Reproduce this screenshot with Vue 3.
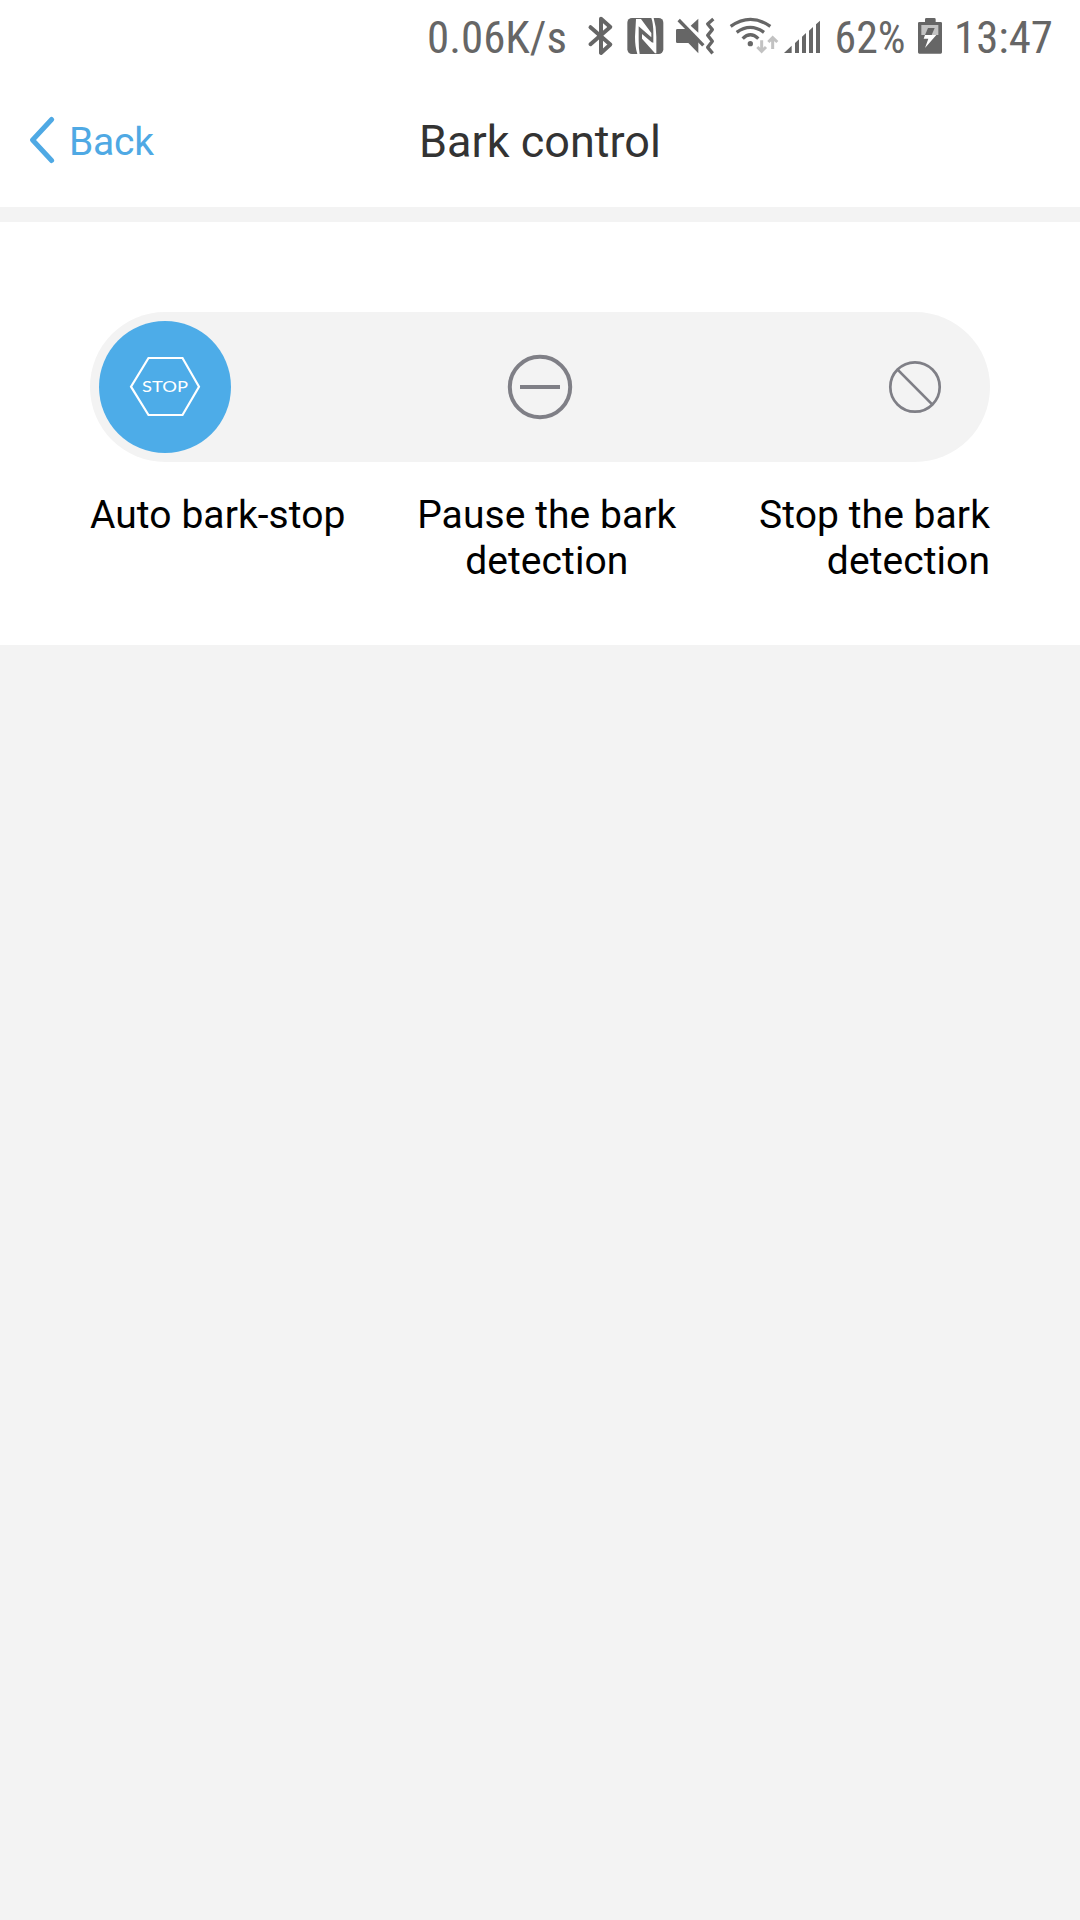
<template>
  <div class="page">
    <div class="status-bar">
      <svg width="150" height="72" viewBox="425 0 150 72">
        <text class="status-text" x="427" y="53" textLength="140" lengthAdjust="spacingAndGlyphs">0.06K/s</text>
      </svg>
      <!-- bluetooth -->
      <svg width="45" height="72" viewBox="575 0 45 72">
        <path class="line" stroke-width="4" d="M590.5 27.2 L610.3 44.5 L601 53 V18.8 L610.3 27 L590.5 44.2" />
      </svg>
      <!-- nfc -->
      <svg width="50" height="72" viewBox="150 0 150 216">
        <rect class="solid" x="172" y="54" width="108" height="108" rx="14" />
        <path fill="#fff" d="M198 57 H213 L244 99 V112 L206 79 V120 Q206 145 209 162 H202 Q195 140 195 110 Z" />
        <path fill="#fff" d="M244 54 H251 Q259 80 259 110 V160 H255 L216 116 V102 L245 127 L250 128 V100 Q250 70 244 54 Z" />
      </svg>
      <!-- sound off / vibrate -->
      <svg width="52" height="72" viewBox="300 0 156 216">
        <path class="solid" d="M385 56 V98 L362 77 Z" />
        <path class="solid" d="M322 87 H350 L385 122 V160 L355 129 H322 Q318 129 318 125 V91 Q318 87 322 87 Z" />
        <path class="line butt" stroke-width="10" d="M326 60 L400 136" />
        <path class="line butt" stroke-width="10" d="M430 57 L413 72 L427 89 L413 106 L427 124 L413 142 L428 160" />
      </svg>
      <!-- wifi -->
      <svg width="60" height="72" viewBox="36 0 180 216">
        <circle class="solid" cx="121" cy="131" r="8" />
        <path class="line butt" stroke-width="10" d="M98 116 Q121 93 145 116 M80 97 Q121 67 162 97 M62 79 Q121 37 181 79" />
        <path fill="none" stroke="#c2c2c2" stroke-width="9" d="M155 121 V152 M142 141 L155 154 L168 141 M188 147 V114 M175 126 L188 113 L202 126" />
      </svg>
      <!-- signal -->
      <svg width="46" height="72" viewBox="216 0 138 216">
        <path class="solid" d="M222 159 L245 137 V159 Z M255 159 V129 L267 118 V159 Z M276 159 V110 L288 99 V159 Z M297 159 V92 L309 81 V159 Z M318 159 V73 L330 62 V159 Z" />
      </svg>
      <svg width="84" height="72" viewBox="828 0 84 72">
        <text class="status-text" x="834.5" y="53" textLength="71" lengthAdjust="spacingAndGlyphs">62%</text>
      </svg>
      <!-- battery -->
      <svg width="36" height="72" viewBox="276 0 108 216">
        <path class="solid" d="M315 66 V58 Q315 54 319 54 H343 Q347 54 347 58 V66 H362 Q366 66 366 70 V157 Q366 161 362 161 H298 Q294 161 294 157 V70 Q294 66 298 66 Z" />
        <rect x="304" y="75" width="51" height="30" fill="#c2c2c2" />
        <path class="solid" d="M324 84 H344 L335 105 H315 Z" />
        <path fill="#fff" d="M315 105 H349 L315 144 L325 116 H311 Z" />
      </svg>
      <svg width="132" height="72" viewBox="948 0 132 72">
        <text class="status-text" x="954" y="53" textLength="99" lengthAdjust="spacingAndGlyphs">13:47</text>
      </svg>
    </div>

    <header class="header">
      <button class="back" type="button">
        <svg width="26" height="48" viewBox="0 0 26 48">
          <path d="M22.6 3.5 L3.6 24 L22.6 44.5" fill="none" stroke="#4fa9e4" stroke-width="5" stroke-linecap="round" stroke-linejoin="round" />
        </svg>
        <span>Back</span>
      </button>
      <h1 class="title">Bark control</h1>
    </header>

    <main class="panel">
      <div class="track">
        <button
          v-for="(mode, i) in modes"
          :key="mode.id"
          type="button"
          class="knob"
          :class="{ active: current === i }"
          @click="current = i"
        >
          <svg v-if="mode.id === 'auto'" width="132" height="132" viewBox="99 321 132 132">
            <path d="M148.5 358 H182.5 L199 386.7 L182.5 415 H148.5 L131 386.7 Z" fill="none" stroke="currentColor" stroke-width="2.2" />
            <text class="stop-text" x="142" y="392" textLength="46" lengthAdjust="spacingAndGlyphs">STOP</text>
          </svg>
          <svg v-else-if="mode.id === 'pause'" width="132" height="132" viewBox="474 321 132 132">
            <circle cx="540" cy="387" r="30.2" fill="none" stroke="currentColor" stroke-width="4" />
            <path d="M520 387 H560" stroke="currentColor" stroke-width="4" />
          </svg>
          <svg v-else width="132" height="132" viewBox="849 321 132 132">
            <circle cx="915" cy="387" r="24.7" fill="none" stroke="currentColor" stroke-width="2.7" />
            <path d="M897.6 369.6 L932.4 404.6" stroke="currentColor" stroke-width="2.7" />
          </svg>
        </button>
      </div>
      <div class="labels">
        <span v-for="mode in modes" :key="mode.id" :class="['label', mode.id]">{{ mode.label }}</span>
      </div>
    </main>
  </div>
</template>

<script setup>
import { ref } from 'vue';

const current = ref(0);

const modes = [
  { id: 'auto', label: 'Auto bark-stop' },
  { id: 'pause', label: 'Pause the bark\ndetection' },
  { id: 'stop', label: 'Stop the bark\ndetection' },
];
</script>

<style>
body {
  margin: 0;
  background: #f3f3f3;
}
</style>

<style scoped>
.page {
  min-height: 1920px;
  background: #f3f3f3;
  font-family: Roboto, 'Liberation Sans', sans-serif;
}
button {
  border: 0;
  padding: 0;
  background: none;
  font: inherit;
}
svg {
  display: block;
  flex: none;
}
.status-bar {
  display: flex;
  justify-content: flex-end;
  height: 72px;
  background: #fff;
}
.status-text {
  font-family: 'Roboto Condensed', Roboto, sans-serif;
  font-size: 45px;
  fill: #666;
}
.solid {
  fill: #666;
}
.line {
  fill: none;
  stroke: #666;
  stroke-linecap: round;
  stroke-linejoin: round;
}
.line.butt {
  stroke-linecap: butt;
}
.header {
  display: grid;
  grid-template-columns: 1fr auto 1fr;
  align-items: center;
  box-sizing: border-box;
  height: 135px;
  padding: 0 29px;
  background: #fff;
}
.back {
  display: flex;
  align-items: center;
  gap: 14px;
  color: #4fa9e4;
  font-size: 39px;
  line-height: 46px;
}
.back span {
  padding-top: 5px;
  letter-spacing: -0.2px;
}
.title {
  margin: 0;
  padding-top: 5px;
  color: #333;
  font-size: 45px;
  font-weight: 400;
  line-height: 54px;
}
.panel {
  box-sizing: border-box;
  height: 423px;
  margin-top: 15px;
  padding: 90px 90px 0;
  background: #fff;
}
.track {
  display: flex;
  justify-content: space-between;
  align-items: center;
  box-sizing: border-box;
  height: 150px;
  padding: 0 9px;
  border-radius: 75px;
  background: #f3f3f3;
}
.knob {
  width: 132px;
  height: 132px;
  border-radius: 50%;
  color: #7f7f86;
}
.knob.active {
  background: #4dace8;
  color: #fff;
}
.stop-text {
  font-family: Lato, sans-serif;
  font-size: 16px;
  fill: currentColor;
}
.labels {
  display: flex;
  justify-content: space-between;
  align-items: flex-start;
  padding-top: 30px;
}
.label {
  color: #000;
  font-size: 39px;
  letter-spacing: 0.07px;
  line-height: 46px;
  white-space: pre-line;
}
.label.pause {
  margin-right: 11px;
  text-align: center;
}
.label.stop {
  text-align: right;
}
</style>
